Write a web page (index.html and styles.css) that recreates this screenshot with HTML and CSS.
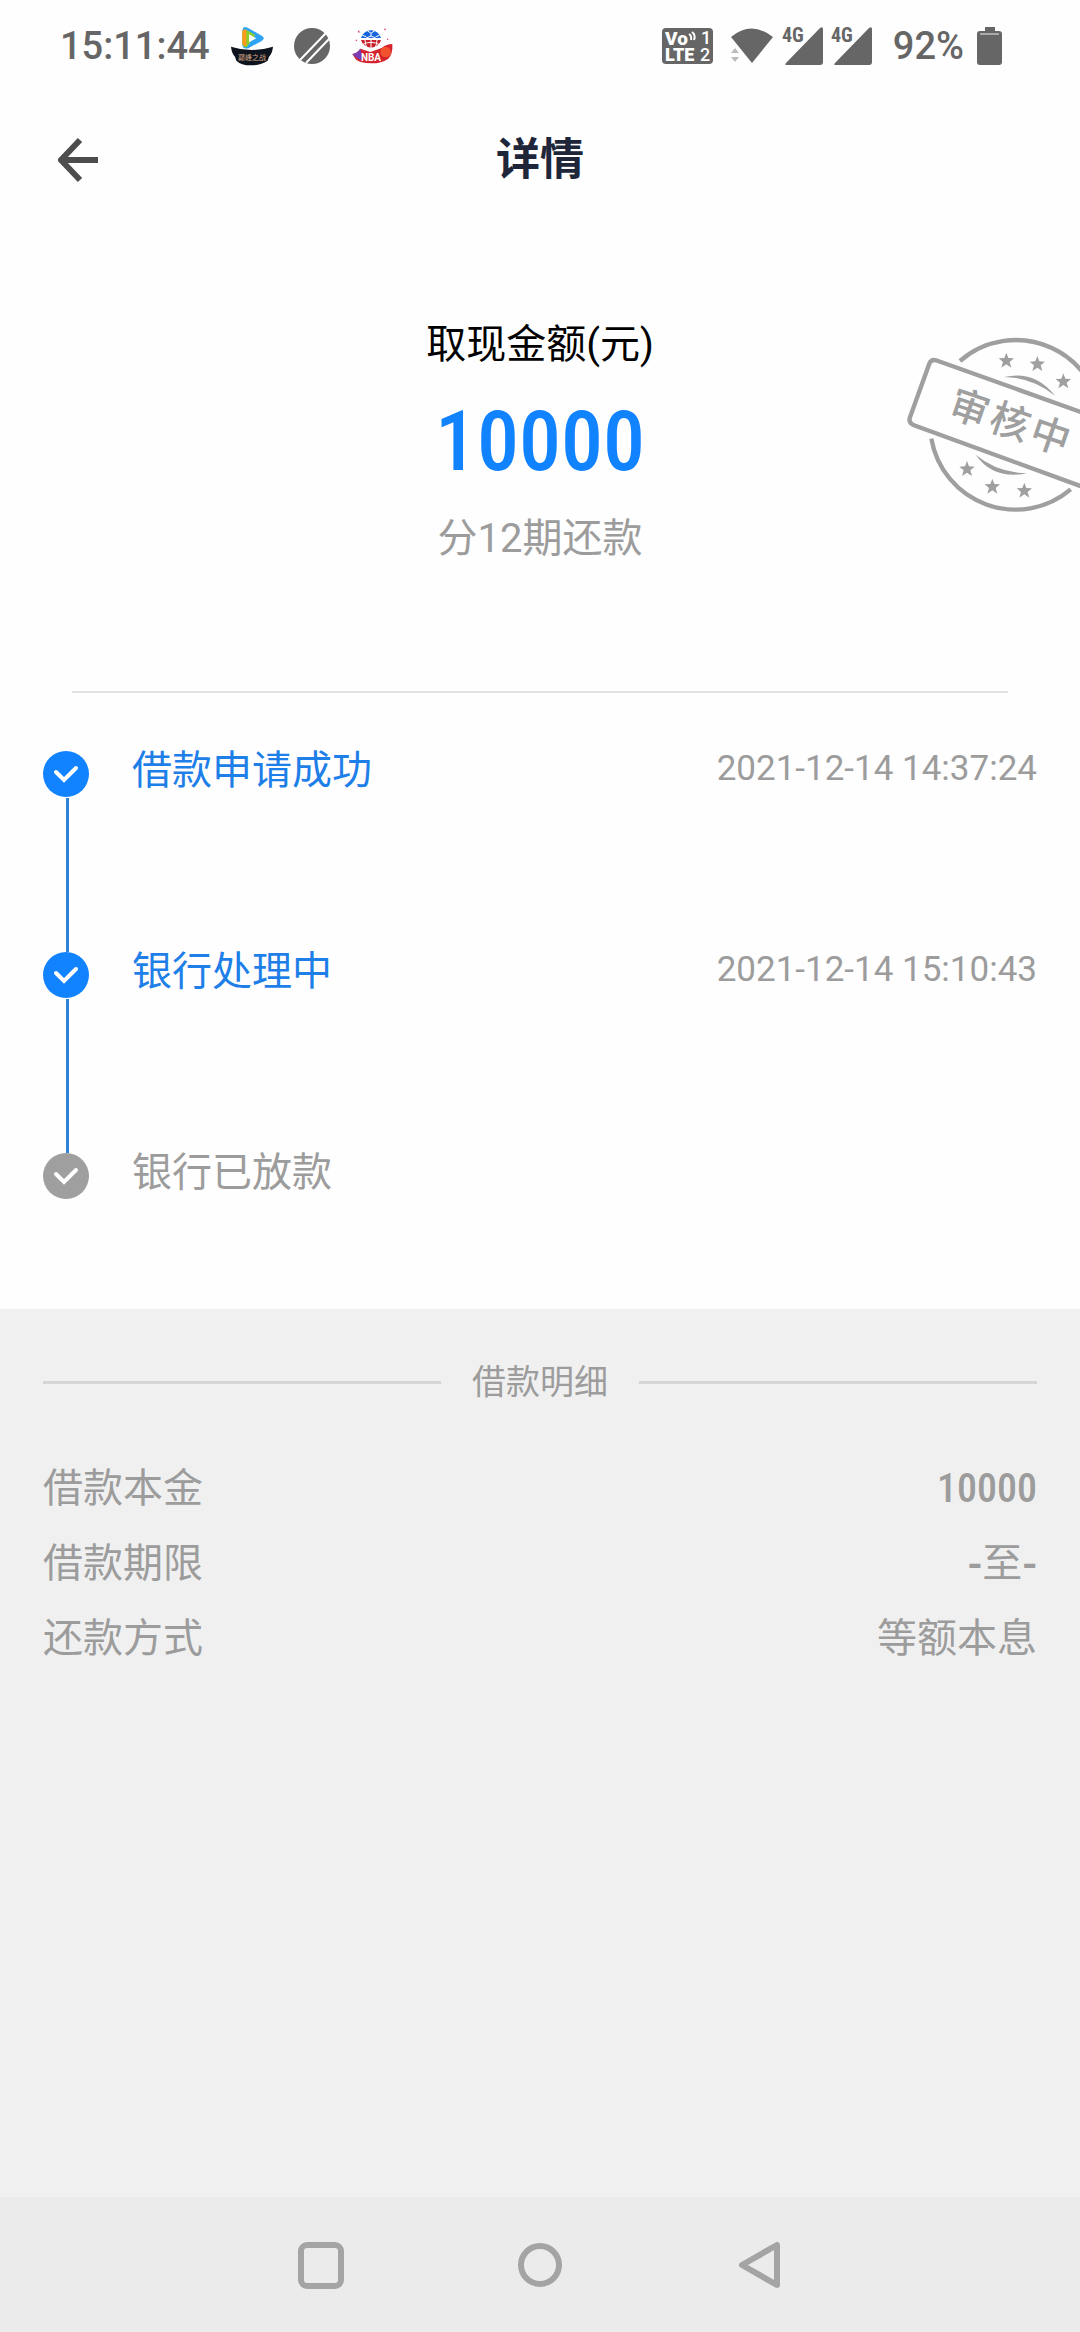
FILE: index.html
```html
<!DOCTYPE html>
<html lang="zh-CN">
<head>
<meta charset="utf-8">
<meta name="viewport" content="width=device-width, initial-scale=1">
<title>详情</title>
<link rel="stylesheet" href="styles.css">
</head>
<body class="page">
<div class="status">
  <div class="status-group">
    <span class="status-text status-clock">15:11:44</span>
    <svg class="status-app" width="42" height="40" viewBox="0 0 126 120" aria-hidden="true">
      <path d="M34 18q0-20 16-13l42 24q12 8 0 16L52 67q-18 4-18-12z" fill="#2fa4f5"/>
      <path d="M34 22q0-14 13-10l26 15-26 37q-13 0-13-12z" fill="#8ccf2d"/>
      <path d="M34 16q2-8 12-5v48q-10 2-12-6z" fill="#ff9a1a"/>
      <path d="M54 25v24l22-12z" fill="#fff"/>
      <path d="M0 62q62 20 126 0-2 20-12 30l-4 12q-20 14-50 14t-44-14l-4-12Q2 82 0 62z" fill="#0d141d"/>
      <text class="badge-title" x="63" y="101" text-anchor="middle" font-size="21">巅峰之战</text>
    </svg>
    <svg class="status-app" width="36" height="36" viewBox="0 0 36 36" aria-hidden="true">
      <circle cx="18" cy="18" r="18" fill="#666"/>
      <path d="M6 32 32 5M12 35 35 11" stroke="#fff" stroke-width="2" fill="none"/>
    </svg>
    <svg class="status-app" width="42" height="36" viewBox="0 0 126 108" aria-hidden="true">
      <path d="M4 78q14-2 24-16l30 10 34-12q14-12 32-12 2 30-12 44-20 14-50 14-36 0-48-12z" fill="#d4232c"/>
      <path d="M4 78q14-2 24-16l8 34-14-2z" fill="#7a3cb4"/>
      <circle cx="104" cy="72" r="16" fill="#f0532d"/>
      <circle cx="60" cy="34" r="33" fill="#fff"/>
      <path d="M30 30a31 31 0 0 1 60 0z" fill="#1764dc"/>
      <path d="M30 36h60a31 31 0 0 1-60 0z" fill="#c8202c"/>
      <path d="M46 6l14 10 14-10M60 16v8l-14 6M60 24l14 6M34 22l12 4M86 22l-12 4M42 36q0 14 8 28M60 36v30M78 36q0 14-8 28M34 50q26-14 52 0" stroke="#fff" stroke-width="3" fill="none"/>
      <path d="M22 8l3 6M100 6l4-4M108 34h4M14 36l4 2" stroke="#e05570" stroke-width="4"/>
      <text class="badge-nba" x="60" y="99" text-anchor="middle" font-size="30">NBA</text>
    </svg>
  </div>
  <div class="status-group status-right">
    <svg width="51" height="36" viewBox="0 0 51 36" aria-hidden="true">
      <rect width="51" height="36" rx="4" fill="#666"/>
      <g class="volte">
        <text x="3" y="17" font-size="19">Vo</text>
        <text x="3" y="33" font-size="18">LTE</text>
        <text class="volte-num" x="39" y="16" font-size="18">1</text>
        <text class="volte-num" x="38" y="33" font-size="18">2</text>
      </g>
      <path d="M27 6q3 2 2 6M30 4q4 3 2 8" stroke="#fff" stroke-width="2" fill="none"/>
    </svg>
    <svg class="wifi" width="43" height="36" viewBox="0 0 43 36" aria-hidden="true">
      <path d="M1 9Q21-8 43 9L22 35z" fill="#666"/>
      <path d="M1 25l4-5 4 5zM1 29h8l-4 5z" fill="#bbb"/>
    </svg>
    <svg class="signal" width="41" height="50" viewBox="0 -6 41 50" aria-hidden="true">
      <path d="M4 36 38 1q3-2 3 1v33q0 3-3 3H5q-3 0-1-2z" fill="#666"/>
      <text class="net" x="0" y="15" font-size="20">4G</text>
    </svg>
    <svg class="signal" width="41" height="50" viewBox="0 -6 41 50" aria-hidden="true">
      <path d="M4 36 38 1q3-2 3 1v33q0 3-3 3H5q-3 0-1-2z" fill="#666"/>
      <text class="net" x="0" y="15" font-size="20">4G</text>
    </svg>
    <span class="status-text status-battery">92%</span>
    <svg width="25" height="38" viewBox="0 0 25 38" aria-hidden="true">
      <path d="M8 0h10v4h4q3 0 3 3v28q0 3-3 3H3q-3 0-3-3V7q0-3 3-3h5z" fill="#666"/>
      <path d="M3 7h19" stroke="#aaa" stroke-width="2"/>
    </svg>
  </div>
</div>

<header class="header">
  <button class="back" type="button" aria-label="返回">
    <svg width="44" height="46" viewBox="0 0 44 46" aria-hidden="true">
      <path d="M24 3 5 23 24 43M5 23H42" fill="none" stroke="#4d4d4d" stroke-width="6" stroke-linejoin="round"/>
    </svg>
  </button>
  <h1 class="title">详情</h1>
</header>

<main class="main">
  <section class="summary">
    <p class="summary-label">取现金额(元)</p>
    <p class="summary-amount">10000</p>
    <p class="summary-term">分12期还款</p>
    <svg class="stamp" width="190" height="210" viewBox="0 0 570 630" role="img" aria-label="审核中">
      <defs>
        <path id="star" d="M0-24 6-8 23-7 10 4 15 21 0 11-15 21-10 4-23-7-6-8z"/>
      </defs>
      <g fill="none" stroke="#9f9f9f" stroke-width="13">
        <path d="M210 123A256 256 0 0 1 634 316M124 356A256 256 0 0 0 542 508"/>
        <path d="M640 300 138 121q-14-4-20 10L60 292q-6 16 12 24L640 523"/>
      </g>
      <g fill="#9f9f9f">
        <path d="M342 171Q434 150 495 227 426 172 342 171zM257 404Q320 457 411 460 310 480 257 404z"/>
        <use href="#star" x="349" y="122"/>
        <use href="#star" x="442" y="132"/>
        <use href="#star" x="520" y="184"/>
        <use href="#star" x="231" y="447"/>
        <use href="#star" x="307" y="500"/>
        <use href="#star" x="403" y="512"/>
      </g>
      <text class="stamp-text" transform="translate(361 304) rotate(19)" x="-128 0 128" y="44" text-anchor="middle" font-size="118">审核中</text>
    </svg>
  </section>

  <ol class="steps">
    <li class="step step-done">
      <svg class="step-icon" width="46" height="46" viewBox="0 0 46 46" aria-hidden="true">
        <circle class="step-dot" cx="23" cy="23" r="23"/>
        <path class="step-tick" d="M13 21l8 8 12-12"/>
      </svg>
      <span class="step-name">借款申请成功</span>
      <time class="step-time" datetime="2021-12-14T14:37:24">2021-12-14 14:37:24</time>
    </li>
    <li class="step step-done">
      <svg class="step-icon" width="46" height="46" viewBox="0 0 46 46" aria-hidden="true">
        <circle class="step-dot" cx="23" cy="23" r="23"/>
        <path class="step-tick" d="M13 21l8 8 12-12"/>
      </svg>
      <span class="step-name">银行处理中</span>
      <time class="step-time" datetime="2021-12-14T15:10:43">2021-12-14 15:10:43</time>
    </li>
    <li class="step">
      <svg class="step-icon" width="46" height="46" viewBox="0 0 46 46" aria-hidden="true">
        <circle class="step-dot" cx="23" cy="23" r="23"/>
        <path class="step-tick" d="M13 21l8 8 12-12"/>
      </svg>
      <span class="step-name">银行已放款</span>
    </li>
  </ol>

  <section class="details">
    <h2 class="details-title">借款明细</h2>
    <dl class="details-list">
      <div class="row"><dt>借款本金</dt><dd class="row-number">10000</dd></div>
      <div class="row"><dt>借款期限</dt><dd><span class="row-dash">-</span>至<span class="row-dash">-</span></dd></div>
      <div class="row"><dt>还款方式</dt><dd>等额本息</dd></div>
    </dl>
  </section>
</main>

<nav class="nav" aria-label="系统导航">
  <button class="nav-button" type="button" aria-label="最近任务">
    <svg width="48" height="48" viewBox="0 0 48 48" aria-hidden="true"><rect x="4" y="4" width="40" height="41" rx="6"/></svg>
  </button>
  <button class="nav-button" type="button" aria-label="主页">
    <svg width="48" height="48" viewBox="0 0 48 48" aria-hidden="true"><circle cx="24" cy="24" r="19"/></svg>
  </button>
  <button class="nav-button" type="button" aria-label="返回上一页">
    <svg width="48" height="48" viewBox="0 0 48 48" aria-hidden="true"><path d="M42 4v40L7 24z"/></svg>
  </button>
</nav>
</body>
</html>
```

FILE: styles.css
```css
* {
  box-sizing: border-box;
}

.page {
  margin: 0;
  min-height: 100vh;
  display: flex;
  flex-direction: column;
  background: #fefefe;
  color: #9c9c9c;
  font-family: Roboto, "Noto Sans CJK SC", sans-serif;
  font-size: 40px;
  line-height: 60px;
}

/* status bar */
.status {
  display: flex;
  justify-content: space-between;
  height: 92px;
  padding: 0 78px 0 60px;
}

.status-group {
  display: flex;
  align-items: center;
}

.status-text {
  color: #666;
  font-size: 38px;
  font-weight: 500;
}

.status-app {
  margin-left: 21px;
}

.badge-title {
  fill: #d9a988;
  font-family: "Noto Sans CJK SC", sans-serif;
}

.badge-nba {
  fill: #fff;
  font-weight: 700;
}

.volte {
  fill: #fff;
  font-weight: 900;
}

.volte-num {
  font-weight: 500;
}

.wifi {
  margin: 0 9px 0 17px;
}

.signal {
  margin-right: 8px;
}

.net {
  fill: #666;
  font-family: "Roboto Condensed", Roboto, sans-serif;
  font-weight: 700;
}

.status-battery {
  margin: 0 13px;
}

/* title bar */
.header {
  display: grid;
  grid-template-columns: 1fr auto 1fr;
  align-items: center;
  height: 136px;
  padding: 0 56px;
}

.back {
  justify-self: start;
  display: flex;
  padding: 0;
  border: 0;
  background: none;
}

.title {
  margin: 0;
  color: #20263a;
  font-size: 44px;
  font-weight: 700;
}

.main {
  flex: 1;
  display: flex;
  flex-direction: column;
}

/* amount */
.summary {
  position: relative;
  overflow: hidden;
  padding: 87px 72px 0;
  text-align: center;
}

.summary::after {
  content: "";
  display: block;
  height: 2px;
  margin-top: 122px;
  background: #e1e1e1;
}

.summary-label,
.summary-amount,
.summary-term {
  margin: 0;
}

.summary-label {
  color: #000;
}

.summary-amount {
  padding: 19px 0;
  color: #1283ff;
  font-family: "Roboto Condensed", "Liberation Sans Narrow", Roboto, sans-serif;
  font-size: 84px;
  font-weight: 500;
  line-height: 96px;
}

.stamp {
  position: absolute;
  top: 92px;
  right: 0;
}

.stamp-text {
  fill: #9f9f9f;
  font-family: "Noto Sans CJK SC", sans-serif;
  font-weight: 500;
}

/* progress */
.steps {
  margin: 0;
  padding: 46px 43px 88px;
  list-style: none;
}

.step {
  position: relative;
  display: flex;
  align-items: flex-start;
  min-height: 201px;
}

.step:last-child {
  min-height: 80px;
}

.step-icon {
  margin: 12px 43px 0 0;
  fill: #9f9f9f;
}

.step-tick {
  fill: none;
  stroke: #fff;
  stroke-width: 4;
  stroke-linecap: round;
}

.step-name {
  flex: 1;
  line-height: 64px;
}

.step-time {
  font-size: 35px;
}

.step-done .step-icon {
  fill: #1283ff;
}

.step-done .step-name {
  color: #1f7fe8;
}

.step-done::after {
  content: "";
  position: absolute;
  top: 59px;
  bottom: -12px;
  left: 23px;
  width: 3px;
  background: #2f82da;
}

/* loan details */
.details {
  flex: 1;
  padding: 43px;
  background: #f0f0f0;
}

.details-title {
  display: flex;
  align-items: center;
  gap: 31px;
  margin: 0 0 39px;
  font-size: 34px;
  font-weight: 400;
}

.details-title::before,
.details-title::after {
  content: "";
  flex: 1;
  height: 3px;
  background: #d6d6d6;
}

.details-list {
  margin: 0;
}

.row {
  display: flex;
  justify-content: space-between;
  line-height: 75px;
}

.row dd {
  margin: 0;
}

.row-number {
  font-family: "Roboto Condensed", "Liberation Sans Narrow", Roboto, sans-serif;
  font-weight: 500;
}

.row-dash {
  font-family: "Noto Sans CJK SC", sans-serif;
  font-weight: 700;
  line-height: 1;
}

/* system navigation */
.nav {
  display: flex;
  justify-content: center;
  align-items: center;
  gap: 171px;
  height: 135px;
  background: #ebebeb;
}

.nav-button {
  display: flex;
  padding: 0;
  border: 0;
  background: none;
  fill: none;
  stroke: #a4a4a4;
  stroke-width: 6;
  stroke-linejoin: round;
}
```
